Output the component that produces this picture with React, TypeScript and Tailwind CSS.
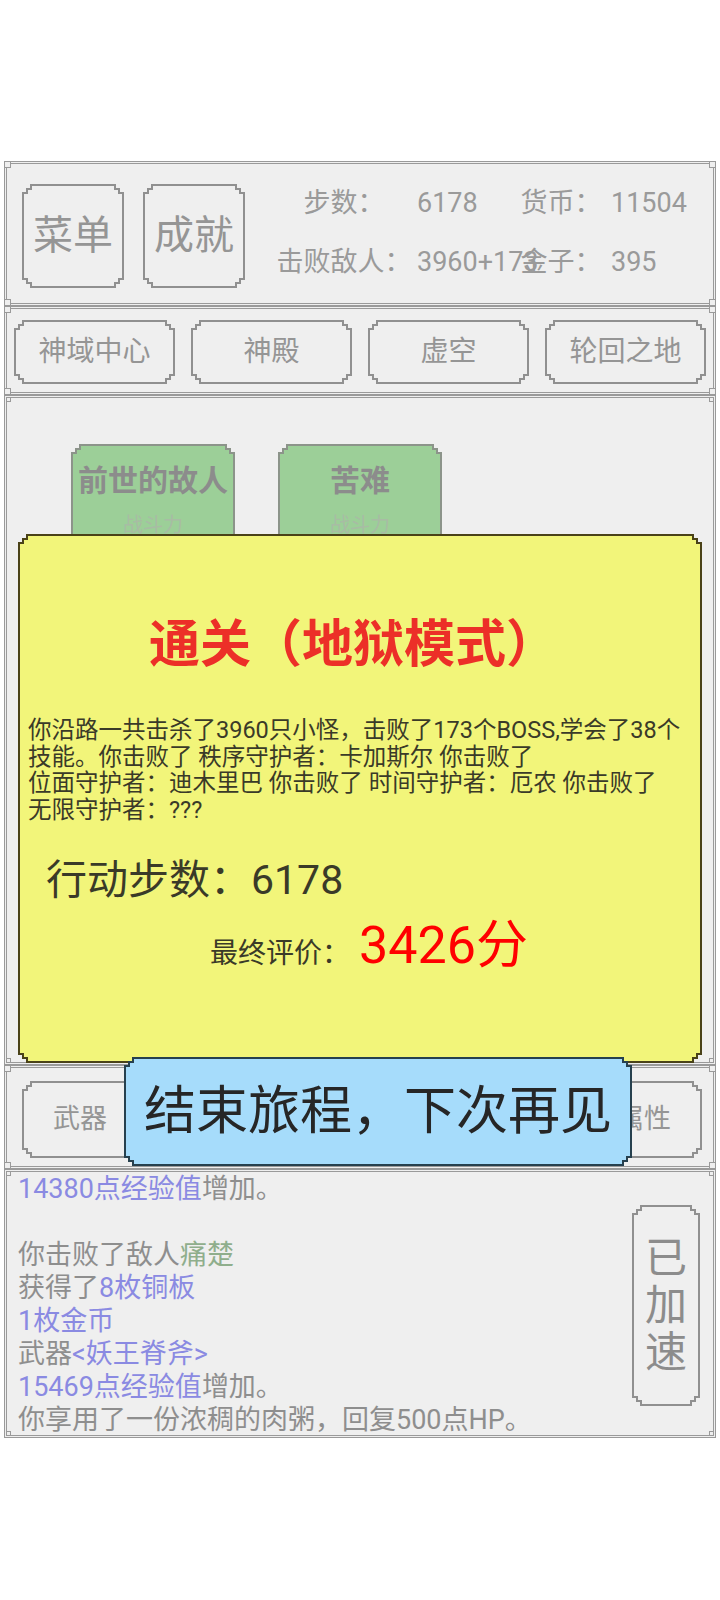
import React from "react";

const NOTCH =
  "[clip-path:polygon(8px_0,calc(100%_-_8px)_0,calc(100%_-_8px)_4px,calc(100%_-_4px)_4px,calc(100%_-_4px)_8px,100%_8px,100%_calc(100%_-_8px),calc(100%_-_4px)_calc(100%_-_8px),calc(100%_-_4px)_calc(100%_-_4px),calc(100%_-_8px)_calc(100%_-_4px),calc(100%_-_8px)_100%,8px_100%,8px_calc(100%_-_4px),4px_calc(100%_-_4px),4px_calc(100%_-_8px),0_calc(100%_-_8px),0_8px,4px_8px,4px_4px,8px_4px)]";

function Notch({
  border,
  fill,
  className = "",
  inner = "",
  children,
}: {
  border: string;
  fill: string;
  className?: string;
  inner?: string;
  children?: React.ReactNode;
}) {
  return (
    <div className={`${NOTCH} ${border} p-[2px] ${className}`}>
      <div className={`${NOTCH} ${fill} w-full h-full ${inner}`}>{children}</div>
    </div>
  );
}

function Corners() {
  const c = "absolute w-[7px] h-[7px] border border-[#9a9a9a] bg-[#efefef]";
  return (
    <>
      <span className={`${c} -top-[3px] -left-[3px]`} />
      <span className={`${c} -top-[3px] -right-[3px]`} />
      <span className={`${c} -bottom-[3px] -left-[3px]`} />
      <span className={`${c} -bottom-[3px] -right-[3px]`} />
    </>
  );
}

function Panel({ className = "", children }: { className?: string; children?: React.ReactNode }) {
  return (
    <div className={`relative bg-[#efefef] border-[3px] border-double border-[#9a9a9a] ${className}`}>
      <Corners />
      {children}
    </div>
  );
}

function GrayButton({ className = "", text }: { className?: string; text?: string }) {
  return (
    <Notch
      border="bg-[#909090]"
      fill="bg-[#efefef]"
      className={className}
      inner="flex items-center justify-center text-[#959595] whitespace-nowrap"
    >
      {text}
    </Notch>
  );
}

const P = ({ children }: { children: React.ReactNode }) => <span className="text-[#8a8ae2]">{children}</span>;
const G = ({ children }: { children: React.ReactNode }) => <span className="text-[#8e8e8e]">{children}</span>;
const Gr = ({ children }: { children: React.ReactNode }) => <span className="text-[#8fae8c]">{children}</span>;

export default function App() {
  const stats = [
    ["步数：", "6178", "货币：", "11504"],
    ["击败敌人：", "3960+173", "金子：", "395"],
  ];
  const places = ["神域中心", "神殿", "虚空", "轮回之地"];
  // the middle tabs sit behind the dialog button, only the outer two show
  const tabs = ["武器", "", "", "", "属性"];
  const enemies = ["前世的故人", "苦难"];

  return (
    <div className="relative w-[720px] min-h-[1600px] bg-white font-['Roboto','Noto_Sans_CJK_SC',sans-serif]">
      <div className="pt-[161px] px-[4px]">
        {/* top bar */}
        <Panel className="h-[145px] flex items-start pl-[15px]">
          <GrayButton className="mt-[20px] w-[102px] h-[104px] text-[40px]" text="菜单" />
          <GrayButton className="mt-[20px] ml-[19px] w-[102px] h-[104px] text-[40px]" text="成就" />
          <div className="mt-[10px] ml-[26px] grid grid-cols-[146px_94px_100px_auto] auto-rows-[59px] items-center text-[27px] text-[#9a9a9a] whitespace-nowrap">
            {stats.map((row, i) => (
              <React.Fragment key={i}>
                <div className="text-center">{row[0]}</div>
                <div>{row[1]}</div>
                <div className="text-center">{row[2]}</div>
                <div>{row[3]}</div>
              </React.Fragment>
            ))}
          </div>
        </Panel>

        {/* places */}
        <Panel className="h-[89px] flex justify-between px-[7px] pt-[11px]">
          {places.map((p) => (
            <GrayButton key={p} className="w-[161px] h-[64px] text-[28px]" text={p} />
          ))}
        </Panel>

        {/* battle area */}
        <Panel className="h-[670px] overflow-hidden flex items-start gap-[43px] pl-[64px] pt-[46px]">
          {enemies.map((e) => (
            <Notch
              key={e}
              border="bg-[#8c948a]"
              fill="bg-[#9ccf98]"
              className="w-[164px] h-[170px]"
              inner="flex flex-col items-center pt-[15px]"
            >
              <div className="text-[30px] leading-[40px] font-bold text-[#8c8c8c] whitespace-nowrap">{e}</div>
              <div className="mt-[11px] text-[20px] leading-[26px] text-[#a8bca4]">战斗力</div>
            </Notch>
          ))}
        </Panel>

        {/* tabs */}
        <Panel className="h-[104px] flex justify-between pl-[15px] pr-[11px] pt-[13px]">
          {tabs.map((t, i) => (
            <GrayButton key={i} className="w-[116px] h-[77px] text-[27px]" text={t} />
          ))}
        </Panel>

        {/* log */}
        <Panel className="h-[269px] flex items-start overflow-hidden">
          <div className="flex-1 pl-[11px] pt-[1px] text-[27px] leading-[33px] whitespace-nowrap">
            <div><P>14380点经验值</P><G>增加。</G></div>
            <div>&nbsp;</div>
            <div><G>你击败了敌人</G><Gr>痛楚</Gr></div>
            <div><G>获得了</G><P>8枚铜板</P></div>
            <div><P>1枚金币</P></div>
            <div><G>武器</G><P>&lt;妖王脊斧&gt;</P></div>
            <div><P>15469点经验值</P><G>增加。</G></div>
            <div><G>你享用了一份浓稠的肉粥，回复500点HP。</G></div>
          </div>
          <Notch
            border="bg-[#909090]"
            fill="bg-[#efefef]"
            className="mt-[33px] mr-[13px] w-[68px] h-[201px]"
            inner="flex flex-col items-center justify-center text-[42px] leading-[47px] text-[#8c8c8c]"
          >
            <span>已</span>
            <span>加</span>
            <span>速</span>
          </Notch>
        </Panel>
      </div>

      {/* result dialog */}
      <Notch
        border="bg-[#4a4218]"
        fill="bg-[#f2f57a]"
        className="absolute left-[18px] top-[534px] w-[684px] h-[529px]"
        inner="flex flex-col"
      >
        <div className="mt-[80px] pr-[14px] text-center text-[51px] leading-[58px] font-bold text-[#ec2f28] whitespace-nowrap">
          通关（地狱模式）
        </div>
        <div className="mt-[43px] pl-[8px] text-[23.5px] leading-[26.5px] text-[#3a3a28] whitespace-nowrap">
          <div>你沿路一共击杀了3960只小怪，击败了173个BOSS,学会了38个</div>
          <div>技能。你击败了 秩序守护者：卡加斯尔 你击败了</div>
          <div>位面守护者：迪木里巴 你击败了 时间守护者：厄农 你击败了</div>
          <div>无限守护者：???</div>
        </div>
        <div className="mt-[33px] pl-[26px] text-[41px] leading-[48px] text-[#3a3a28]">行动步数：6178</div>
        <div className="mt-[12px] pl-[190px] flex items-baseline">
          <span className="text-[28px] text-[#3a3a28]">最终评价：</span>
          <span className="ml-[9px] text-[52px] leading-[60px] text-[#ff0000]">3426分</span>
        </div>
      </Notch>

      <Notch
        border="bg-[#26404e]"
        fill="bg-[#a6dcfb]"
        className="absolute left-[124px] top-[1057px] w-[508px] h-[109px]"
        inner="flex items-center justify-center text-[52px] text-[#262626] whitespace-nowrap"
      >
        结束旅程，下次再见
      </Notch>
    </div>
  );
}
